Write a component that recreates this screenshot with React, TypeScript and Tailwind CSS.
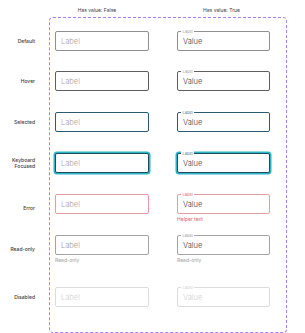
type State = "default" | "hover" | "selected" | "focused" | "error" | "readonly" | "disabled";

type Row = {
  name: string[];
  state: State;
  mt: string;
  h: string;
};

const rows: Row[] = [
  { name: ["Default"], state: "default", mt: "mt-0", h: "h-[20px]" },
  { name: ["Hover"], state: "hover", mt: "mt-[20px]", h: "h-[20px]" },
  { name: ["Selected"], state: "selected", mt: "mt-[21px]", h: "h-[20px]" },
  { name: ["Keyboard", "Focused"], state: "focused", mt: "mt-[21px]", h: "h-[20px]" },
  { name: ["Error"], state: "error", mt: "mt-[21px]", h: "h-[28px]" },
  { name: ["Read-only"], state: "readonly", mt: "mt-[13px]", h: "h-[28px]" },
  { name: ["Disabled"], state: "disabled", mt: "mt-[24px]", h: "h-[20px]" },
];

const styles: Record<State, { border: string; placeholder: string; label: string; value: string }> = {
  default: {
    border: "border-[#8f8f8f]",
    placeholder: "text-[#a3a3a3]",
    label: "text-[#a3a3a3]",
    value: "text-[#3a3a3a]",
  },
  hover: {
    border: "border-[#5e5e5e]",
    placeholder: "text-[#a3a3a3]",
    label: "text-[#a3a3a3]",
    value: "text-[#3a3a3a]",
  },
  selected: {
    border: "border-[#2b5c74]",
    placeholder: "text-[#a3a3a3]",
    label: "text-[#4a7f98]",
    value: "text-[#3a3a3a]",
  },
  focused: {
    border: "border-[#1f4c5e] shadow-[0_0_0_1.5px_#2cb3c7]",
    placeholder: "text-[#a3a3a3]",
    label: "text-[#4a7f98]",
    value: "text-[#3a3a3a]",
  },
  error: {
    border: "border-[#e89aa2]",
    placeholder: "text-[#a3a3a3]",
    label: "text-[#e0606c]",
    value: "text-[#3a3a3a]",
  },
  readonly: {
    border: "border-[#a3a3a3]",
    placeholder: "text-[#9a9a9a]",
    label: "text-[#9a9a9a]",
    value: "text-[#3a3a3a]",
  },
  disabled: {
    border: "border-[#dcdcdc]",
    placeholder: "text-[#d2d2d2]",
    label: "text-[#d2d2d2]",
    value: "text-[#cfcfcf]",
  },
};

function Field({ state, filled }: { state: State; filled: boolean }) {
  const s = styles[state];
  return (
    <div className={`relative h-[20px] rounded-[2px] border bg-white flex items-center px-[5px] ${s.border}`}>
      {filled && (
        <span className={`absolute left-[3px] top-[-3px] bg-white px-[1.5px] text-[4px] leading-[5px] ${s.label}`}>
          Label
        </span>
      )}
      <span className={`text-[7.5px] leading-[9px] font-light ${filled ? s.value : s.placeholder}`}>
        {filled ? "Value" : "Label"}
      </span>
    </div>
  );
}

function Helper({ text, color }: { text: string; color: string }) {
  return <div className={`mt-[3px] text-[5px] leading-[5px] ${color}`}>{text}</div>;
}

export default function App() {
  return (
    <div className="w-[305px] h-[333px] bg-white font-['Inter',sans-serif] overflow-hidden">
      <div className="flex h-[17px] pt-[7px] pl-[54px] text-[5px] leading-[6px] text-[#3a3a3a]">
        <div className="w-[94px] pr-[8px] text-center">Has value: False</div>
        <div className="ml-[28px] w-[93px] pr-[2px] text-center">Has value: True</div>
      </div>
      <div className="flex">
        <div className="w-[35px] pt-[14px] flex flex-col">
          {rows.map((r) => (
            <div
              key={r.state}
              className={`${r.mt} ${r.h} flex flex-col justify-center items-end text-right text-[5px] leading-[6.5px] font-medium text-[#3a3a3a]`}
            >
              {r.name.map((n) => (
                <span key={n}>{n}</span>
              ))}
            </div>
          ))}
        </div>
        <div className="ml-[14px] w-[238px] h-[316px] rounded-[4px] border border-dashed border-[#b07cf5] pt-[13px] pl-[5px] flex flex-col">
          {rows.map((r) => (
            <div key={r.state} className={`${r.mt} ${r.h} flex gap-[28px]`}>
              <div className="w-[94px]">
                <Field state={r.state} filled={false} />
                {r.state === "readonly" && <Helper text="Read-only" color="text-[#9c9c9c]" />}
              </div>
              <div className="w-[93px]">
                <Field state={r.state} filled={true} />
                {r.state === "error" && <Helper text="Helper text" color="text-[#e0606c]" />}
                {r.state === "readonly" && <Helper text="Read-only" color="text-[#9c9c9c]" />}
              </div>
            </div>
          ))}
        </div>
      </div>
    </div>
  );
}
